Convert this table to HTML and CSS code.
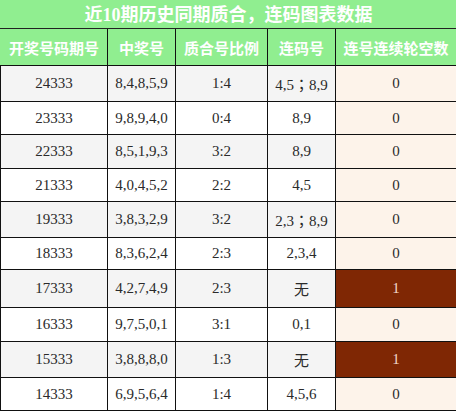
FILE: index.html
```html
<!DOCTYPE html>
<html lang="zh">
<head>
<meta charset="utf-8">
<link rel="stylesheet" href="styles.css">
</head>
<body>
<table class="chart">
  <colgroup>
    <col class="c1"><col class="c2"><col class="c3"><col class="c4"><col class="c5">
  </colgroup>
  <thead>
    <tr class="title-row"><th colspan="5" class="title">近10期历史同期质合，连码图表数据</th></tr>
    <tr class="head-row">
      <th>开奖号码期号</th><th>中奖号</th><th>质合号比例</th><th>连码号</th><th>连号连续轮空数</th>
    </tr>
  </thead>
  <tbody>
    <tr class="odd h36"><td>24333</td><td>8,4,8,5,9</td><td>1:4</td><td class="pair">4,5<span class="semi">；</span>8,9</td><td class="miss">0</td></tr>
    <tr class="even h33"><td>23333</td><td>9,8,9,4,0</td><td>0:4</td><td>8,9</td><td class="miss">0</td></tr>
    <tr class="odd h34"><td>22333</td><td>8,5,1,9,3</td><td>3:2</td><td>8,9</td><td class="miss">0</td></tr>
    <tr class="even h33"><td>21333</td><td>4,0,4,5,2</td><td>2:2</td><td>4,5</td><td class="miss">0</td></tr>
    <tr class="odd h36"><td>19333</td><td>3,8,3,2,9</td><td>3:2</td><td class="pair">2,3<span class="semi">；</span>8,9</td><td class="miss">0</td></tr>
    <tr class="even h32"><td>18333</td><td>8,3,6,2,4</td><td>2:3</td><td>2,3,4</td><td class="miss">0</td></tr>
    <tr class="odd h38"><td>17333</td><td>4,2,7,4,9</td><td>2:3</td><td class="none">无</td><td class="miss hot">1</td></tr>
    <tr class="even h34"><td>16333</td><td>9,7,5,0,1</td><td>3:1</td><td>0,1</td><td class="miss">0</td></tr>
    <tr class="odd h36"><td>15333</td><td>3,8,8,8,0</td><td>1:3</td><td class="none">无</td><td class="miss hot">1</td></tr>
    <tr class="even h33"><td>14333</td><td>6,9,5,6,4</td><td>1:4</td><td>4,5,6</td><td class="miss">0</td></tr>
  </tbody>
</table>
</body>
</html>
```
FILE: styles.css
```css
html, body {
  margin: 0;
  padding: 0;
  background: #ffffff;
}

.chart {
  width: 456px;
  border-collapse: collapse;
  table-layout: fixed;
  font-family: "Liberation Serif", "Noto Sans CJK SC", serif;
  font-size: 15px;
  color: #2a2a2a;
}

.c1 { width: 107px; }
.c2 { width: 68px; }
.c3 { width: 92px; }
.c4 { width: 68px; }
.c5 { width: 121px; }

.title-row { height: 28px; }

.title {
  background: #90ee90;
  color: #ffffff;
  font-size: 18px;
  font-weight: bold;
  padding: 0;
  border: 1px solid #90ee90;
  border-bottom: 1px solid #222222;
  line-height: 26px;
}

.head-row { height: 37px; }

.head-row th {
  background: #90ee90;
  color: #ffffff;
  font-family: "Noto Sans CJK SC", sans-serif;
  font-size: 15px;
  font-weight: bold;
  padding: 0;
  border: 1px solid #111111;
}

.head-row th:first-child { border-left-color: #90ee90; }

td {
  text-align: center;
  padding: 0;
  border: 1px solid #111111;
}

.odd td { background: #f4f4f4; }
.even td { background: #ffffff; }

.chart td.miss { background: #fdf3ea; }
.chart td.hot { background: #7f2704; color: #f3d9c9; }

.semi { font-family: "Noto Sans CJK TC", sans-serif; }

.none { font-family: "Noto Sans CJK SC", sans-serif; font-size: 15px; }

.h32 { height: 32px; }
.h33 { height: 33px; }
.h34 { height: 34px; }
.h36 { height: 36px; }
.h38 { height: 38px; }
```
